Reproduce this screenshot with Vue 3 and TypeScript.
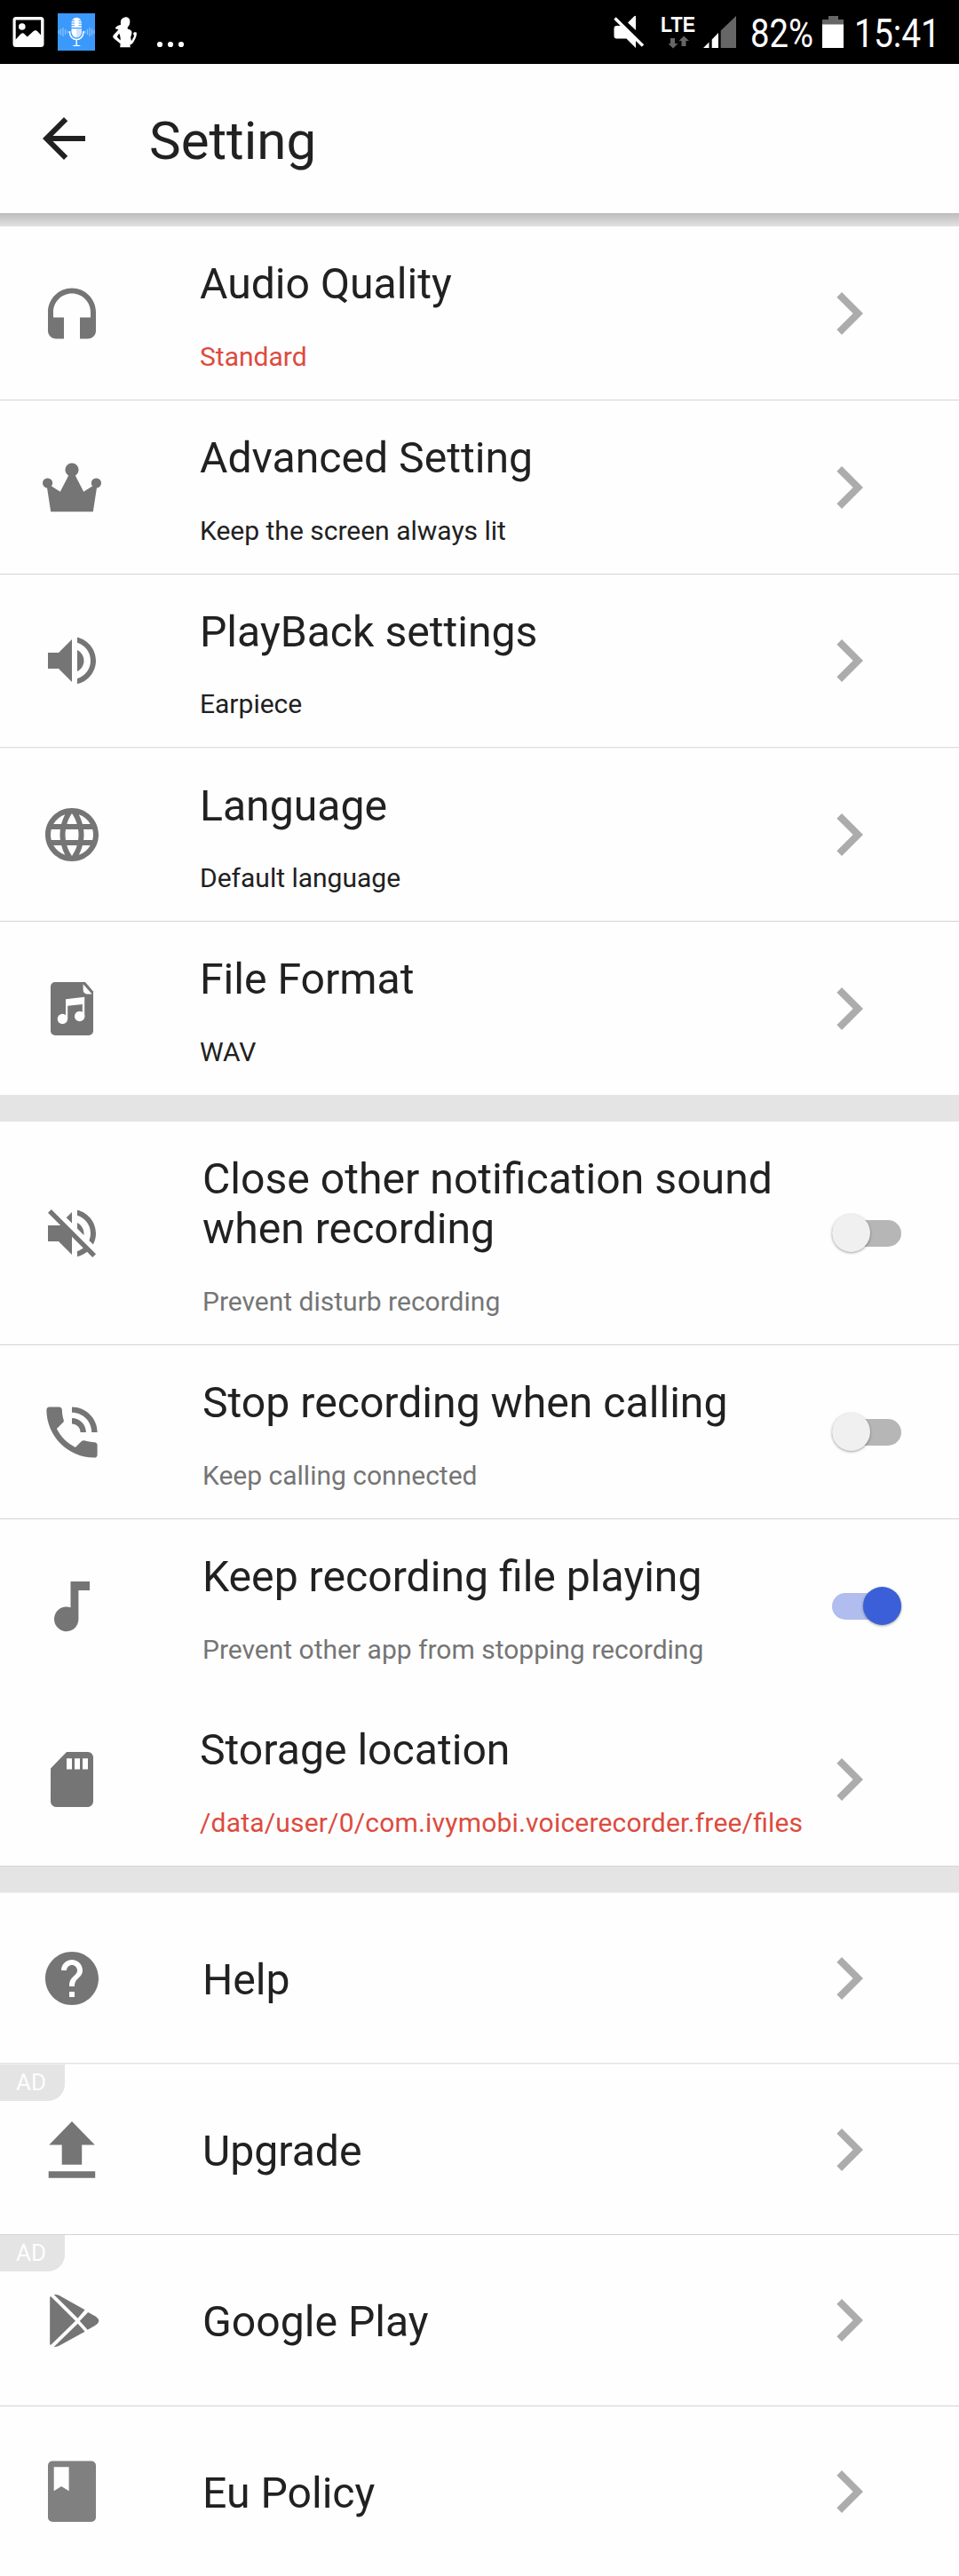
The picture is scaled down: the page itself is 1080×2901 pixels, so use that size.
<script setup lang="ts">
import { ref } from 'vue'

type IconName =
  | 'headset' | 'crown' | 'volume' | 'globe' | 'musicFile'
  | 'volumeOff' | 'phone' | 'note' | 'sdCard'
  | 'help' | 'upgrade' | 'play' | 'book'

interface Row {
  icon: IconName
  title: string
  sub?: string
  tone?: 'red' | 'dark' | 'grey'
  toggle?: boolean
  on?: boolean
  ad?: boolean
  indent?: boolean
  path?: boolean
  height: number
  line?: 'solid' | 'soft'
}

// Every glyph is drawn on a 72 x 72 canvas; 24-unit glyphs are scaled by three.
const icons: Record<IconName, string> = {
  headset:
    '<path transform="translate(0 4.5) scale(3)" d="M12 1c-4.97 0-9 4.03-9 9v7c0 1.66 1.34 3 3 3h3v-8H5v-2c0-3.87 3.13-7 7-7s7 3.13 7 7v2h-4v8h3c1.66 0 3-1.34 3-3v-7c0-4.97-4.03-9-9-9z"/>',
  crown:
    '<circle cx="36" cy="16" r="7.6"/><circle cx="8.6" cy="31" r="5.6"/><circle cx="63.4" cy="31" r="5.6"/><path d="M12.2 63.2 7.8 35l4.4-1 10.6 6.8 8.4-16.2L33 20h6l1.8 4.6 8.4 16.2L59.8 34l4.4 1-4.4 28.2z"/>',
  volume:
    '<path transform="scale(3)" d="M3 9v6h4l5 5V4L7 9H3zm13.5 3c0-1.77-1.02-3.29-2.5-4.03v8.05c1.48-.73 2.5-2.25 2.5-4.02zM14 3.23v2.06c2.89.86 5 3.54 5 6.71s-2.11 5.85-5 6.71v2.06c4.01-.91 7-4.49 7-8.77s-2.99-7.86-7-8.77z"/>',
  globe:
    '<path transform="scale(3)" d="M11.99 2C6.47 2 2 6.48 2 12s4.47 10 9.99 10C17.52 22 22 17.52 22 12S17.52 2 11.99 2zm6.93 6h-2.95c-.32-1.25-.78-2.45-1.38-3.56 1.84.63 3.37 1.91 4.33 3.56zM12 4.04c.83 1.2 1.48 2.53 1.91 3.96h-3.82c.43-1.43 1.08-2.76 1.91-3.96zM4.26 14C4.1 13.36 4 12.69 4 12s.1-1.36.26-2h3.38c-.08.66-.14 1.32-.14 2 0 .68.06 1.34.14 2H4.26zm.82 2h2.95c.32 1.25.78 2.45 1.38 3.56-1.84-.63-3.37-1.9-4.33-3.56zm2.95-8H5.08c.96-1.66 2.49-2.93 4.33-3.56C8.81 5.55 8.35 6.75 8.03 8zM12 19.96c-.83-1.2-1.48-2.53-1.91-3.96h3.82c-.43 1.43-1.08 2.76-1.91 3.96zM14.34 14H9.66c-.09-.66-.16-1.32-.16-2 0-.68.07-1.35.16-2h4.68c.09.65.16 1.32.16 2 0 .68-.07 1.34-.16 2zm.25 5.56c.6-1.11 1.06-2.31 1.38-3.56h2.95c-.96 1.65-2.49 2.93-4.33 3.56zM16.36 14c.08-.66.14-1.32.14-2 0-.68-.06-1.34-.14-2h3.38c.16.64.26 1.31.26 2s-.1 1.36-.26 2h-3.38z"/>',
  musicFile:
    '<path d="M17 6h34l9 10.5V61a5 5 0 0 1-5 5H17a5 5 0 0 1-5-5V11a5 5 0 0 1 5-5z"/><g fill="#fefefe"><path d="M48.6 8.2 58.6 19.5H54c-3.4 0-5.4-2-5.4-5z"/><path d="M29 25.2 50.2 22.8V44.5h-2.4V31L31.2 32.8V47.5H29z"/><circle cx="25.4" cy="47.5" r="5.7"/><circle cx="44.7" cy="44.5" r="5.7"/></g>',
  volumeOff:
    '<path transform="scale(3)" d="M16.5 12c0-1.77-1.02-3.29-2.5-4.03v2.21l2.45 2.45c.03-.2.05-.41.05-.63zm2.5 0c0 .94-.2 1.82-.54 2.64l1.51 1.51C20.63 14.91 21 13.5 21 12c0-4.28-2.99-7.86-7-8.77v2.06c2.89.86 5 3.54 5 6.71zM4.27 3L3 4.27 7.73 9H3v6h4l5 5v-6.73l4.25 4.25c-.67.52-1.42.93-2.25 1.18v2.06c1.38-.31 2.63-.95 3.69-1.81L19.73 21 21 19.73l-9-9L4.27 3zM12 4L9.91 6.09 12 8.18V4z"/>',
  phone:
    '<path transform="translate(-2.16 -2.16) scale(3.18)" d="M20 15.5c-1.25 0-2.45-.2-3.57-.57-.35-.11-.74-.03-1.02.24l-2.2 2.2c-2.83-1.44-5.15-3.75-6.59-6.59l2.2-2.21c.28-.26.36-.65.25-1C8.7 6.45 8.5 5.25 8.5 4c0-.55-.45-1-1-1H4c-.55 0-1 .45-1 1 0 9.39 7.61 17 17 17 .55 0 1-.45 1-1v-3.5c0-.55-.45-1-1-1zM19 12h2c0-4.97-4.03-9-9-9v2c3.87 0 7 3.13 7 7zm-4 0h2c0-2.76-2.24-5-5-5v2c1.66 0 3 1.34 3 3z"/>',
  note:
    '<path d="M34.5 8H56v10H43.4v32.2a13.7 13.9 0 1 1-8.9-12.9z"/>',
  sdCard:
    '<path transform="translate(0 -1.1) scale(3 3.09)" d="M18 2h-8L4.02 8 4 20c0 1.1.9 2 2 2h12c1.1 0 2-.9 2-2V4c0-1.1-.9-2-2-2zm-6 6.3h-2V4.3h2zm3 0h-2V4.3h2zm3 0h-2V4.3h2z"/>',
  help:
    '<path transform="scale(3)" d="M12 2C6.48 2 2 6.48 2 12s4.48 10 10 10 10-4.48 10-10S17.52 2 12 2zm1 17h-2v-2h2v2zm2.07-7.75l-.9.92C13.45 12.9 13 13.5 13 15h-2v-.5c0-1.1.45-2.1 1.17-2.83l1.24-1.26c.37-.36.59-.86.59-1.41 0-1.1-.9-2-2-2s-2 .9-2 2H8c0-2.21 1.79-4 4-4s4 1.79 4 4c0 .88-.36 1.68-.93 2.25z"/>',
  upgrade:
    '<path d="M36 4 61.8 30.5H47.2V52.7H24.7V30.5H10.3z"/><path d="M9.7 60.3H62.2V67.7H9.7z"/>',
  play:
    '<path d="M11.2 10.5Q11.2 9 12.3 9.2L40 36.7 12.3 63.8Q11.2 64 11.2 62.5z"/><path d="M15.7 7Q19 6.6 22 8.2L50.6 24.3 42.6 33.7z"/><path d="M15.7 65.9Q19 66.2 22 64.5L50.6 48.8 42.6 39.7z"/><path d="M54.2 27 62 31.2Q66.3 34 66.3 36.6T62 42L53.6 46.7 44.8 36.7z"/>',
  book:
    '<path fill="#808080" d="M14 1.5H58a5 5 0 0 1 5 5V65a5 5 0 0 1-5 5H14a5 5 0 0 1-5-5V6.5a5 5 0 0 1 5-5z"/><path fill="#fefefe" d="M15.7 8.3H32.6V35.3L24.1 30 15.7 35.3z"/>',
}

const groups = ref<Row[][]>([
  [
    { icon: 'headset', title: 'Audio Quality', sub: 'Standard', tone: 'red', height: 195, line: 'solid' },
    { icon: 'crown', title: 'Advanced Setting', sub: 'Keep the screen always lit', tone: 'dark', height: 195, line: 'solid' },
    { icon: 'volume', title: 'PlayBack settings', sub: 'Earpiece', tone: 'dark', height: 194, line: 'soft' },
    { icon: 'globe', title: 'Language', sub: 'Default language', tone: 'dark', height: 194, line: 'solid' },
    { icon: 'musicFile', title: 'File Format', sub: 'WAV', tone: 'dark', height: 195 },
  ],
  [
    { icon: 'volumeOff', title: 'Close other notification sound when recording', sub: 'Prevent disturb recording', tone: 'grey', toggle: true, indent: true, height: 251, line: 'solid' },
    { icon: 'phone', title: 'Stop recording when calling', sub: 'Keep calling connected', tone: 'grey', toggle: true, indent: true, height: 195, line: 'solid' },
    { icon: 'note', title: 'Keep recording file playing', sub: 'Prevent other app from stopping recording', tone: 'grey', toggle: true, on: true, indent: true, height: 195 },
    { icon: 'sdCard', title: 'Storage location', sub: '/data/user/0/com.ivymobi.voicerecorder.free/files', tone: 'red', path: true, height: 195 },
  ],
  [
    { icon: 'help', title: 'Help', indent: true, height: 191, line: 'soft' },
    { icon: 'upgrade', title: 'Upgrade', indent: true, ad: true, height: 191, line: 'solid' },
    { icon: 'play', title: 'Google Play', indent: true, ad: true, height: 192, line: 'solid' },
    { icon: 'book', title: 'Eu Policy', indent: true, height: 191 },
  ],
])
</script>

<template>
  <div class="screen">
    <header class="status">
      <div class="status-left">
        <svg width="36" height="72" viewBox="0 0 36 72">
          <path fill="#fff" fill-rule="evenodd" d="M4 19h28a3.5 3.5 0 0 1 3.5 3.5v27A3.5 3.5 0 0 1 32 53H4a3.5 3.5 0 0 1-3.5-3.5v-27A3.5 3.5 0 0 1 4 19zm-.3 3.6V44.5l5-5.5q2.500-3 5-.5l3 3 6.500-6q2.800-2.500 5.200 0l3.700 4V22.600z" />
          <circle cx="10.8" cy="30" r="3.8" fill="#fff" />
        </svg>
        <svg class="mic" width="42" height="72" viewBox="0 0 42 72">
          <rect y="15" width="42" height="42" fill="#3b99fc" />
          <g stroke="#8cc3fd" stroke-width="1.2">
            <path d="M1 34v4M3.5 32.5v7M6 31v10M8.5 33v6M11 34.5v3M31 34.5v3M33.5 33v6M36 31v10M38.5 32.5v7M41 34v4" />
          </g>
          <path fill="#fff" d="M15.5 25.5a5.7 5.7 0 0 1 11.4 0V36a5.7 6.3 0 0 1-11.4 0z" />
          <path fill="#cfe5fd" d="M21.2 32.5h5.7V36a5.7 6.3 0 0 1-5.7 6.3z" />
          <path stroke="#3b99fc" stroke-width="1.1" d="M15 23.3h4M23.5 23.3h4M15 26h4M23.5 26h4M15 28.7h4M23.5 28.7h4M15 31.6h12.5" />
          <path fill="none" stroke="#fff" stroke-width="1.5" d="M12.5 36h2M28 36h2M13.5 36.5a7.7 8 0 0 0 15.4 0M21.2 44.5v6" />
          <path fill="#fff" d="M16.5 52q1-1.6 4.700-1.6T26 52z" />
        </svg>
        <svg class="person" width="30" height="72" viewBox="0 0 30 72">
          <path fill="#fff" d="M14.500 19.500c3.500-.8 6.200 1.500 5.800 5.500-.2 2.600-1 4.200-2.600 5.400v2c3 .8 4.800 1.800 4.800 4.200 0 2.300-1.500 4-1.300 6.200l.8 3.500 3-5.600-1-3.200 1.600-1.500 2.300.8c0 3-.5 5-2 7.800-1.600 3-3 5.800-5.500 5.800l.4 2.900H9.200l.4-4L2.200 43.300c-1.500-1.800-1.300-2.500 0-4.200l5.200-5.500-3.800-1.500c1.200-2.500 3.500-3.600 6.500-4.400-.7-3.500 0-7.300 4.400-8.200zM8.200 37.500 5.700 41.500 9.600 45.500c.4-3-.4-5-1.400-8z" />
        </svg>
        <svg class="dots" width="32" height="72" viewBox="0 0 32 72" fill="#fff">
          <circle cx="4" cy="50" r="3.1" /><circle cx="16" cy="50" r="3.1" /><circle cx="28" cy="50" r="3.1" />
        </svg>
      </div>
      <div class="status-right">
        <svg width="35" height="72" viewBox="0 0 35 72">
          <path fill="#fff" d="M.5 32a3 3 0 0 1 3-3H11L25 43.5V54L14.5 43.5H3.5a3 3 0 0 1-3-3zM16 25.5 23 18.5q2-1.5 2 .5V34z" />
          <path stroke="#000" stroke-width="2" d="M4.5 18.5 35 49" />
          <path stroke="#fff" stroke-width="3.4" d="M1.5 20.5 33 51.5" />
        </svg>
        <svg class="lte" width="44" height="72" viewBox="0 0 44 72">
          <text x="0" y="36" textLength="39" lengthAdjust="spacingAndGlyphs">LTE</text>
          <path fill="#666" d="M11 43h5v6h3.5L14 54.5 8.5 49H11zM23.5 52h5v-6H32l-5.8-5.5L20.500 46h3z" />
        </svg>
        <svg class="signal" width="37" height="72" viewBox="0 0 37 72">
          <path fill="#fff" d="M0 54 6.5 47.5V54zM9.7 54V44.5L17 37v17z" />
          <path fill="#666" d="M19.7 54V34.5L37 18v36z" />
        </svg>
        <svg class="percent" width="76" height="72" viewBox="0 0 76 72">
          <text class="clock" x="2" y="53.3" textLength="71" lengthAdjust="spacingAndGlyphs">82%</text>
        </svg>
        <svg class="battery" width="24" height="72" viewBox="0 0 24 72">
          <path fill="#666" d="M7 18h11v4h6v8H0v-8h7z" />
          <path fill="#fff" d="M0 27.5h24V54H0z" />
        </svg>
        <svg class="time" width="100" height="72" viewBox="0 0 100 72">
          <text class="clock" x="1" y="53.3" textLength="97" lengthAdjust="spacingAndGlyphs">15:41</text>
        </svg>
      </div>
    </header>

    <div class="toolbar">
      <svg width="72" height="72" viewBox="0 0 24 24" fill="#212121">
        <path d="M20 11H7.830l5.590-5.590L12 4l-8 8 8 8 1.410-1.410L7.830 13H20v-2z" />
      </svg>
      <h1>Setting</h1>
    </div>
    <div class="shadow"></div>

    <template v-for="(rows, g) in groups" :key="g">
      <div v-if="g > 0" class="gap" :class="{ edged: g === 2 }"></div>
      <template v-for="row in rows" :key="row.title">
        <div
          class="row"
          :class="{ indent: row.indent, single: !row.sub, short: row.height === 194 }"
          :style="{ height: row.height + 'px' }"
        >
          <span v-if="row.ad" class="ad">AD</span>
          <svg class="icon" width="72" height="72" viewBox="0 0 72 72" v-html="icons[row.icon]" />
          <div class="texts">
            <div class="title">{{ row.title }}</div>
            <div v-if="row.sub" class="sub" :class="[row.tone, { path: row.path }]">{{ row.sub }}</div>
          </div>
          <span v-if="row.toggle" class="switch" :class="{ on: row.on }" @click="row.on = !row.on">
            <i class="thumb"></i>
          </span>
          <svg v-else class="chevron" width="96" height="96" viewBox="0 0 24 24">
            <path d="M10 6L8.59 7.41 13.17 12l-4.58 4.59L10 18l6-6z" />
          </svg>
        </div>
        <div v-if="row.line" class="line" :class="row.line"></div>
      </template>
    </template>
  </div>
</template>

<style>
body {
  background: #fefefe;
}
</style>

<style scoped>
.screen {
  width: 1080px;
  height: 2901px;
  overflow: hidden;
  background: #fefefe;
  color: #212121;
  font-family: Roboto, "Noto Sans", sans-serif;
}
svg {
  display: block;
  flex: none;
  overflow: visible;
}
.status {
  display: flex;
  justify-content: space-between;
  height: 72px;
  padding: 0 19px 0 14px;
  background: #000;
}
.status-left,
.status-right {
  display: flex;
}
.mic { margin-left: 15px; }
.person { margin-left: 19px; }
.dots { margin-left: 20px; }
.lte { margin-left: 18px; }
.lte text {
  font: bold 23px "Liberation Sans", sans-serif;
  fill: #fff;
}
.signal { margin-left: 4px; }
.percent { margin-left: 14px; }
.battery { margin-left: 7px; }
.time { margin-left: 11px; }
.clock {
  font-size: 45px;
  fill: #fff;
}
.toolbar {
  display: flex;
  align-items: center;
  height: 168px;
  padding-left: 36px;
  box-sizing: border-box;
}
.toolbar h1 {
  margin: 5px 0 0 60px;
  font-size: 60px;
  font-weight: 400;
  line-height: 70px;
}
.shadow {
  height: 15px;
  background: linear-gradient(#bcbcbc, #e2e2e2);
}
.row {
  position: relative;
  display: flex;
  align-items: center;
  box-sizing: border-box;
  padding-left: 45px;
}
.icon {
  fill: #757575;
}
.texts {
  flex: none;
  align-self: flex-start;
  width: 680px;
  margin-left: 108px;
  padding-top: 37px;
}
.indent .texts {
  width: 660px;
  margin-left: 111px;
  margin-right: 17px;
}
.single .texts {
  align-self: center;
  padding-top: 4px;
}
.title {
  font-size: 48.15px;
  line-height: 56px;
}
.sub {
  margin-top: 36px;
  font-size: 30px;
  line-height: 35px;
  white-space: nowrap;
}
.short .sub {
  margin-top: 35px;
}
.path {
  letter-spacing: 0.19px;
  font-feature-settings: "liga" 1;
}
.red { color: #dd4b3e; }
.dark { color: #212121; }
.grey { color: #757575; }
.chevron {
  margin-left: 3px;
  fill: #acacac;
}
.switch {
  position: relative;
  flex: none;
  width: 78px;
  height: 30px;
  margin-left: 32px;
  border-radius: 15px;
  background: #b6b6b6;
}
.thumb {
  position: absolute;
  top: -7px;
  left: 0;
  width: 43px;
  height: 43px;
  border-radius: 50%;
  background: #f0f0f0;
  box-shadow: 0 1px 3px rgba(0, 0, 0, 0.38);
}
.switch.on { background: #b0bdee; }
.switch.on .thumb {
  left: 35px;
  background: #3a5fd9;
}
.line { height: 1px; background: #d4d4d4; }
.line.soft {
  box-sizing: border-box;
  height: 2px;
  background: #f1f1f1;
  border-top: 1px solid #e2e2e2;
}
.gap {
  height: 30px;
  background: #e4e4e4;
}
.gap.edged {
  height: 31px;
  box-sizing: border-box;
  border-top: 1px solid #d6d6d6;
  border-bottom: 1px solid #f1f1f1;
}
.ad {
  position: absolute;
  top: 0;
  left: 0;
  width: 73px;
  height: 41px;
  padding-left: 18px;
  box-sizing: border-box;
  border-bottom-right-radius: 19px;
  background: #e4e4e4;
  color: #fdfdfd;
  font-size: 26px;
  line-height: 41px;
}
</style>
